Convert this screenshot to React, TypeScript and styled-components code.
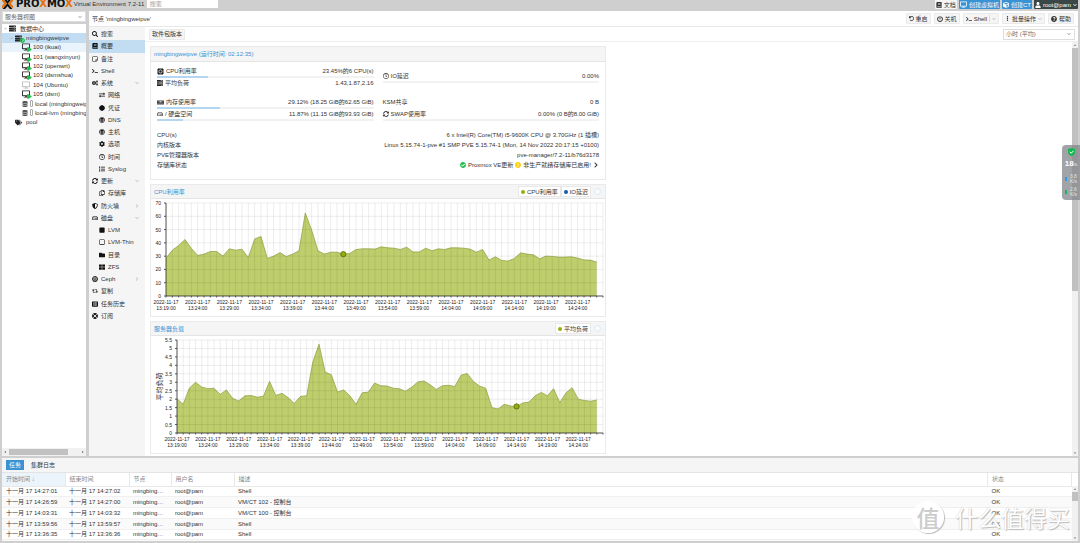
import React from 'react';
import styled, { createGlobalStyle } from 'styled-components';
import {
  FaSearch, FaBook, FaRegStickyNote, FaTerminal, FaCogs, FaExchangeAlt, FaCertificate, FaGlobe, FaCog,
  FaRegClock, FaList, FaSyncAlt, FaRegCopy, FaShieldAlt, FaRegHdd, FaSquare, FaRegSquare, FaFolder,
  FaThLarge, FaRetweet, FaListAlt, FaLifeRing, FaDesktop, FaServer, FaDatabase, FaTags, FaUser, FaCube,
  FaUndo, FaPowerOff, FaEllipsisV, FaQuestionCircle, FaMemory, FaCheckCircle,
  FaExclamationCircle, FaChevronRight, FaChevronDown, FaPlay, FaCaretUp, FaCaretDown, FaCaretLeft, FaCaretRight,
} from 'react-icons/fa';
import type { IconType } from 'react-icons';

const Global = createGlobalStyle`
  *, *::before, *::after { box-sizing: border-box; }
  body {
    margin: 0;
    font: 6px/8px "Liberation Sans", "Noto Sans CJK SC", sans-serif;
    color: #333;
    background: #cfcfcf;
    overflow: hidden;
  }
  button, input, select { font: inherit; color: inherit; margin: 0; padding: 0; border: 0; }
  a { color: inherit; text-decoration: none; }
  ul { list-style: none; margin: 0; padding: 0; }
  svg { flex: none; display: block; }
`;

const Page = styled.div`
  position: relative;
  display: flex;
  flex-direction: column;
  height: 100vh;
  padding: 0 2px 2px;
`;

/* ---------- top bar ---------- */
const TopBar = styled.header`
  display: flex;
  align-items: flex-start;
  height: 11px;
  flex: none;
`;
const Logo = styled.div`
  display: flex;
  align-items: flex-start;
  gap: 3px;
  font: bold 10px/8px "DejaVu Sans", sans-serif;
  color: #111;
`;
const Orange = styled.span`color: #e57000;`;
const Version = styled.span`
  width: 73px;
  margin-left: 1px;
  white-space: nowrap;
`;
const SearchBox = styled.input`
  width: 71px;
  height: 8px;
  padding: 0 3px;
  background: #fff;
  &::placeholder { color: #999; opacity: 1; }
`;
const TopActions = styled.div`
  display: flex;
  gap: 2px;
  margin-left: auto;
`;
const TopButton = styled.button<{ $tone: 'light' | 'blue' | 'dark' }>`
  display: flex;
  align-items: center;
  justify-content: center;
  gap: 2px;
  height: 9px;
  padding: 0 1px;
  border-radius: 0 0 1px 1px;
  white-space: nowrap;
  color: ${p => (p.$tone === 'light' ? '#333' : '#fff')};
  background: ${p => ({ light: '#f5f5f5', blue: '#3892d4', dark: '#3b4747' })[p.$tone]};
`;

/* ---------- left tree ---------- */
const Upper = styled.div`
  display: flex;
  gap: 3px;
  flex: 1;
  min-height: 0;
`;
const Left = styled.aside`
  display: flex;
  flex-direction: column;
  gap: 2px;
  width: 84px;
  flex: none;
`;
const SelectWrap = styled.label<{ $width: string }>`
  display: flex;
  align-items: center;
  width: ${p => p.$width};
  height: 11px;
  padding: 0 3px 0 2px;
  background: #fff;
  border: 1px solid #ddd;
  color: #666;
  select {
    flex: 1;
    appearance: none;
    background: transparent;
    outline: 0;
  }
`;
const TreePanel = styled.div`
  display: flex;
  flex-direction: column;
  flex: 1;
  background: #fff;
  overflow: hidden;
`;
const Tree = styled.ul`
  display: grid;
  grid-auto-rows: 1fr;
  height: 103px;
`;
const TreeRow = styled.a<{ $level: number; $state?: string }>`
  display: flex;
  align-items: center;
  gap: 2px;
  height: 100%;
  padding-left: ${p => [2, 8, 20][p.$level]}px;
  white-space: nowrap;
  background: ${p => (p.$state === 'selected' ? '#c2ddf2' : p.$state === 'hover' ? '#e8f3fb' : 'transparent')};
`;
const IconSlot = styled.span`
  position: relative;
  display: flex;
  align-items: center;
  gap: 2px;
  min-width: 9px;
  color: #222;
`;
const Badge = styled.span`
  position: absolute;
  right: -1px;
  bottom: -1px;
  color: #21bf4b;
`;
const Twisty = styled.span`
  display: flex;
  width: 4px;
  margin-right: -1px;
  color: #999;
`;
const Meter = styled.span`
  width: 3px;
  height: 7px;
  border: 1px solid #aaa;
  border-radius: 1px;
`;
const HScroll = styled.div`
  display: flex;
  align-items: center;
  justify-content: space-between;
  height: 8px;
  margin-top: auto;
  padding: 0 1px;
  background: #f1f1f1;
  color: #555;
`;
const HThumb = styled.div`
  width: 59px;
  height: 6px;
  margin-right: auto;
  margin-left: 2px;
  background: #c1c1c1;
`;

/* ---------- centre ---------- */
const Center = styled.main`
  display: flex;
  flex-direction: column;
  flex: 1;
  min-width: 0;
  background: #fff;
`;
const TitleBar = styled.div`
  display: flex;
  align-items: center;
  justify-content: space-between;
  height: 16px;
  flex: none;
  padding: 0 4px 0 3px;
  border-bottom: 1px solid #e8e8e8;
`;
const ButtonRow = styled.div`
  display: flex;
  gap: 3px;
`;
const ToolButton = styled.button`
  display: flex;
  align-items: center;
  gap: 2px;
  height: 11px;
  padding: 0 2px;
  border: 1px solid #eaeaea;
  border-radius: 1px;
  background: #f5f5f5;
  white-space: nowrap;
`;
const Split = styled.span`
  width: 1px;
  height: 7px;
  background: #ddd;
`;
const CenterBody = styled.div`
  display: flex;
  flex: 1;
  min-height: 0;
`;
const Nav = styled.nav`
  width: 56px;
  flex: none;
  padding-top: 1px;
  background: #f5f5f5;
`;
const NavList = styled.ul`
  display: grid;
  grid-auto-rows: 1fr;
  height: 294px;
`;
const NavLink = styled.a<{ $child?: boolean; $on?: boolean }>`
  display: flex;
  align-items: center;
  gap: 3px;
  height: 100%;
  padding-right: 6px;
  padding-left: ${p => (p.$child ? 10 : 3)}px;
  white-space: nowrap;
  background: ${p => (p.$on ? '#c2ddf2' : 'transparent')};
  svg:first-child { color: #111; }
  svg:last-child:not(:first-child) { margin-left: auto; color: #bbb; }
`;
const Content = styled.section`
  display: flex;
  flex-direction: column;
  flex: 1;
  min-width: 0;
`;
const ContentBar = styled.div`
  display: flex;
  align-items: center;
  justify-content: space-between;
  height: 15px;
  flex: none;
  padding: 0 3px 0 4px;
  border-bottom: 1px solid #eee;
`;
const ScrollArea = styled.div`
  display: flex;
  flex: 1;
  min-height: 0;
  overflow: hidden;
`;
const Panels = styled.div`
  display: grid;
  grid-template-columns: 1fr 1fr;
  align-content: start;
  gap: 4px 5px;
  flex: 1;
  padding: 4px 5px;
`;
const Panel = styled.article`
  grid-column: 1;
  border: 1px solid #eaeaea;
  background: #fff;
`;
const PanelHead = styled.header<{ $height: number }>`
  display: flex;
  align-items: center;
  justify-content: space-between;
  height: ${p => p.$height}px;
  padding: 0 3px;
  border-bottom: 1px solid #e4e4e4;
  background: #f5f5f5;
`;
const PanelTitle = styled.h2`
  margin: 0;
  font-size: 6px;
  font-weight: 400;
  color: #3892d4;
`;
const Legend = styled.div`
  display: flex;
  align-items: center;
`;
const LegendButton = styled.button<{ $dot: string }>`
  display: flex;
  align-items: center;
  gap: 2px;
  height: 11px;
  padding: 0 2px;
  border: 1px solid #e8e8e8;
  background: #fff;
  &::before {
    content: "";
    width: 4px;
    height: 4px;
    border-radius: 50%;
    background: ${p => p.$dot};
  }
`;
const Collapse = styled.button`
  width: 7px;
  height: 7px;
  margin: 0 1px 0 3px;
  border: 1px solid #dce9f4;
  border-radius: 50%;
  background: #f8fbfd;
`;
const VScroll = styled.div`
  display: flex;
  flex-direction: column;
  align-items: center;
  width: 6px;
  flex: none;
  padding: 1px 0;
  background: #f1f1f1;
  color: #777;
`;
const VThumb = styled.div<{ $share: string }>`
  width: 100%;
  height: ${p => p.$share};
  margin: 1px 0 auto;
  background: #c1c1c1;
`;

/* ---------- status panel ---------- */
const StatusBody = styled.div`
  padding: 4px 6px 9px;
`;
const Gauges = styled.div`
  display: grid;
  grid-template-columns: 1fr 1fr;
  gap: 7px 9px;
`;
const GaugeGroup = styled.div<{ $centered?: boolean }>`
  padding-top: ${p => (p.$centered ? 5 : 0)}px;
`;
const GaugeRow = styled.div`
  display: flex;
  flex-direction: column;
  height: 12px;
`;
const Line = styled.div`
  display: flex;
  align-items: center;
  justify-content: space-between;
  height: 10px;
  white-space: nowrap;
`;
const Tag = styled.span`
  display: flex;
  align-items: center;
  gap: 2px;
`;
const Track = styled.div`
  height: 2px;
  background: #f2f2f2;
`;
const Fill = styled.div`
  height: 2px;
  background: #b5d6f0;
`;
const Facts = styled.div`
  margin-top: 9px;
`;

/* ---------- log ---------- */
const Log = styled.section`
  display: flex;
  flex-direction: column;
  height: 83px;
  flex: none;
  margin-top: 2px;
  background: #fff;
`;
const Tabs = styled.div`
  display: flex;
  align-items: center;
  gap: 4px;
  height: 15px;
  flex: none;
  padding: 0 4px;
  background: #f5f5f5;
  border-bottom: 1px solid #e4e4e4;
`;
const Tab = styled.button<{ $on?: boolean }>`
  height: 10px;
  padding: 0 3px;
  color: ${p => (p.$on ? '#fff' : '#333')};
  background: ${p => (p.$on ? '#3892d4' : 'transparent')};
`;
const LogBody = styled.div`
  display: flex;
  flex: 1;
  min-height: 0;
  overflow: hidden;
`;
const LogTable = styled.table`
  flex: 1;
  width: 100%;
  min-width: 0;
  height: 77px;
  table-layout: fixed;
  border-collapse: collapse;
  th, td {
    padding: 0 4px;
    text-align: left;
    font-weight: 400;
    line-height: 8px;
    white-space: nowrap;
    overflow: hidden;
    text-overflow: ellipsis;
  }
  th {
    height: 13px;
    color: #888;
    border-right: 1px solid #e8e8e8;
    border-bottom: 1px solid #e8e8e8;
  }
  th:first-child { background: #ebf4fb; }
  tbody tr:nth-child(even) { background: #fafafa; }
  tbody tr + tr { border-top: 1px solid #f0f0f0; }
`;
const Col = styled.col<{ $width?: number }>`
  width: ${p => (p.$width ? `${p.$width}px` : 'auto')};
`;
const LogScroll = styled(VScroll)`margin-top: 13px;`;

/* ---------- overlays ---------- */
const Monitor = styled.div`
  position: absolute;
  top: 145px;
  right: 0;
  display: flex;
  flex-direction: column;
  align-items: center;
  gap: 1px;
  width: 18px;
  height: 55px;
  padding: 3px 1px;
  border-radius: 4px 0 0 4px;
  background: rgba(135, 137, 142, 0.78);
  color: #e4e4e4;
  font-size: 5px;
  line-height: 5px;
`;
const Percent = styled.strong`
  margin-top: 3px;
  color: #fff;
  font-size: 8px;
  line-height: 8px;
  small { font-size: 4px; font-weight: 400; }
`;
const LoadBar = styled.div`
  width: 12px;
  height: 2px;
  margin-bottom: 3px;
  background: linear-gradient(90deg, #1fc28b 18%, #3c4046 18%);
`;
const Rate = styled.div<{ $color: string }>`
  display: flex;
  align-items: center;
  gap: 3px;
  & + & { margin-top: 2px; }
  &::before {
    content: "";
    width: 2px;
    height: 4px;
    background: ${p => p.$color};
  }
`;
const Watermark = styled.div`
  position: absolute;
  right: 10px;
  bottom: 10px;
  display: flex;
  align-items: center;
  gap: 11px;
  color: #fff;
  font: 23px/32px "Noto Sans CJK SC", sans-serif;
  text-shadow: 1px 1px 1px #bbb, 0 0 1px #bbb;
`;
const Seal = styled.span`
  width: 32px;
  height: 32px;
  border-radius: 50%;
  background: rgba(255, 255, 255, 0.92);
  box-shadow: 1px 1px 1px #bbb;
  color: #ccc;
  text-align: center;
  text-shadow: none;
  font-weight: 500;
`;

/* ---------- data ---------- */
const cpu = [28.5, 34.5, 38, 42.5, 36, 30.5, 31.5, 33.5, 33.5, 30, 35.5, 34.5, 35.2, 29, 43, 44.8, 28.3, 30, 32.7, 29.7, 31.5, 34,
  62.5, 49.5, 34, 31.5, 33, 33, 31.5, 32, 35, 35.5, 35.5, 35.3, 37, 36.3, 36, 35, 36.7, 33.2, 33.2, 36, 34, 35.5, 35, 36.3, 36.3, 36,
  35.3, 33, 35, 27, 29.5, 26.8, 26.3, 28.3, 32.5, 31.5, 31, 28, 30, 29.8, 29.3, 29.3, 29.5, 28.5, 27.2, 27, 25.5];
const load = [2.02, 1.7, 2.65, 3, 2.72, 2.62, 2.65, 2.28, 2.55, 2.05, 1.9, 2.2, 2.22, 2.12, 2.17, 3.05, 2.22, 2.35, 2.1, 1.75, 2.17,
  2.2, 4.2, 5.25, 3.6, 3.45, 2.42, 2.55, 2.2, 1.7, 2.38, 2.42, 2.95, 2.8, 2.78, 2.65, 2.62, 2.47, 2.7, 3.02, 3.08, 2.85, 2.58, 2.8,
  2.82, 2.75, 3.42, 3.52, 3.05, 2.78, 2.65, 1.5, 1.42, 1.7, 1.6, 1.57, 1.77, 1.83, 2.2, 2.4, 2.2, 2.62, 1.8, 2.38, 2.68, 2, 1.92,
  1.88, 1.95];
const times = ['13:19', '13:24', '13:29', '13:34', '13:39', '13:44', '13:49', '13:54', '13:59', '14:04', '14:09', '14:14', '14:19', '14:24'];

type ChartProps = { data: number[]; max: number; step: number; left: number; top: number; bottom: number; mark: number; axis?: string };

function Chart({ data, max, step, left, top, bottom, mark, axis }: ChartProps) {
  const right = 452;
  const dx = (right - left) / 69;
  const x = (i: number) => left + i * dx;
  const y = (v: number) => bottom - (v / max) * (bottom - top);
  const line = data.map((v, i) => `${x(i).toFixed(1)},${y(v).toFixed(1)}`).join(' ');
  const ticks = Array.from({ length: Math.round(max / step) + 1 }, (_, i) => i * step);
  return (
    <svg viewBox="0 0 454 117" width="100%" fontSize="5" fill="#222">
      <polygon points={`${left},${bottom} ${line} ${x(data.length - 1)},${bottom}`} fill="#94ae0a" fillOpacity="0.6" />
      <g stroke="#000" strokeOpacity="0.07" strokeWidth="1">
        {Array.from({ length: 70 }, (_, i) => <line key={i} x1={x(i)} x2={x(i)} y1={top} y2={bottom} />)}
        {ticks.map(t => <line key={t} x1={left} x2={right} y1={y(t)} y2={y(t)} />)}
      </g>
      <polyline points={line} fill="none" stroke="#8a9c3c" strokeWidth="0.7" />
      <g stroke="#333" strokeWidth="0.8">
        <line x1={left} x2={left} y1={top} y2={bottom} />
        <line x1={left} x2={right} y1={bottom} y2={bottom} />
        {Array.from({ length: 70 }, (_, i) => <line key={i} x1={x(i)} x2={x(i)} y1={bottom} y2={bottom + 1.5} />)}
        {ticks.map(t => <line key={t} x1={left - 2} x2={left} y1={y(t)} y2={y(t)} />)}
      </g>
      {ticks.map(t => <text key={t} x={left - 5} y={y(t) + 2} textAnchor="end">{t}</text>)}
      {times.map((t, i) => (
        <text key={t} textAnchor="middle">
          <tspan x={x(i * 5)} y={bottom + 8}>2022-11-17</tspan>
          <tspan x={x(i * 5)} y={bottom + 14}>{t}:00</tspan>
        </text>
      ))}
      {axis && <text transform={`translate(11 ${(top + bottom) / 2}) rotate(-90)`} textAnchor="middle" fontSize="7">{axis}</text>}
      <circle cx={x(mark)} cy={y(data[mark])} r="2.6" fill="#94ae0a" stroke="#566606" strokeWidth="0.8" />
    </svg>
  );
}

type NavItem = [IconType, string, ('child' | 'open' | 'closed' | 'on')?];
const navItems: NavItem[] = [
  [FaSearch, '搜索'], [FaBook, '概要', 'on'], [FaRegStickyNote, '备注'], [FaTerminal, 'Shell'], [FaCogs, '系统', 'open'],
  [FaExchangeAlt, '网络', 'child'], [FaCertificate, '凭证', 'child'], [FaGlobe, 'DNS', 'child'], [FaGlobe, '主机', 'child'],
  [FaCog, '选项', 'child'], [FaRegClock, '时间', 'child'], [FaList, 'Syslog', 'child'], [FaSyncAlt, '更新', 'open'],
  [FaRegCopy, '存储库', 'child'], [FaShieldAlt, '防火墙', 'closed'], [FaRegHdd, '磁盘', 'open'], [FaSquare, 'LVM', 'child'],
  [FaRegSquare, 'LVM-Thin', 'child'], [FaFolder, '目录', 'child'], [FaThLarge, 'ZFS', 'child'], [CephIcon, 'Ceph', 'closed'],
  [FaRetweet, '复制'], [FaListAlt, '任务历史'], [FaLifeRing, '订阅'],
];

function CephIcon({ size = 6 }: { size?: string | number }) {
  return (
    <svg width={size} height={size} viewBox="0 0 16 16" fill="none" stroke="currentColor">
      <circle cx="8" cy="8" r="6.6" strokeWidth="2.6" />
      <circle cx="8" cy="8" r="3.4" strokeWidth="1.6" />
      <circle cx="8" cy="8" r="1" fill="currentColor" />
      <path d="M5 15v-3M11 15v-3" strokeWidth="2" />
    </svg>
  );
}

function ChipIcon() {
  return (
    <svg width="7" height="7" viewBox="0 0 14 14">
      <path d="M3 0v14M5.700 0v14M8.300 0v14M11 0v14M0 3h14M0 5.700h14M0 8.300h14M0 11h14" stroke="#222" />
      <rect x="1.5" y="1.5" width="11" height="11" rx="2" fill="#222" />
      <circle cx="7" cy="7" r="3.2" fill="none" stroke="#fff" strokeWidth="1.4" />
    </svg>
  );
}

function BarsIcon() {
  return (
    <svg width="6" height="6" viewBox="0 0 12 12">
      <path d="M0 0h12v3.400H0zM0 4.300h12v3.400H0zM0 8.600h12V12H0z" fill="#222" />
      <path d="M7.500 1.200h3.500v1H7.500zM4.500 5.500H11v1H4.500zM8.500 9.800H11v1H8.500z" fill="#fff" />
    </svg>
  );
}

const guests: [string, boolean][] = [
  ['100 (ikuai)', true], ['101 (wangxinyun)', true], ['102 (openwrt)', true], ['103 (dsmshua)', true], ['104 (Ubuntu)', false], ['105 (dsm)', true],
];

const tasks = [
  ['17 14:27:01', '17 14:27:02', 'Shell'],
  ['17 14:26:59', '17 14:27:00', 'VM/CT 102 - 控制台'],
  ['17 14:03:31', '17 14:03:32', 'VM/CT 100 - 控制台'],
  ['17 13:59:56', '17 13:59:57', 'Shell'],
  ['17 13:36:35', '17 13:36:36', 'Shell'],
  ['17 13:36:20', '17 13:36:33', 'VM/CT 100 - 控制台'],
];

type GaugeProps = { icon?: React.ReactNode; label: string; value: string; share?: number };
const Gauge = ({ icon, label, value, share }: GaugeProps) => (
  <GaugeRow>
    <Line><Tag>{icon}{label}</Tag><span>{value}</span></Line>
    {share !== undefined && <Track><Fill style={{ width: `${share}%` }} /></Track>}
  </GaugeRow>
);

export default function App() {
  return (
    <Page>
      <Global />
      <TopBar>
        <Logo>
          <svg width="11" height="9" viewBox="0 0 11 9" fill="none">
            <path d="M1 -3L5.500 2.500L10 -3M1 10L5.500 4.500L10 10" stroke="#111" strokeWidth="2" />
            <path d="M0 -0.500L3.500 3.500L0 7.500M11 -0.500L7.500 3.500L11 7.500" stroke="#e57000" strokeWidth="2" />
          </svg>
          <span>PRO<Orange>X</Orange>MO<Orange>X</Orange></span>
        </Logo>
        <Version>Virtual Environment 7.2-11</Version>
        <SearchBox type="search" placeholder="搜索" aria-label="搜索" />
        <TopActions>
          <TopButton $tone="light"><FaBook size={6} />文档</TopButton>
          <TopButton $tone="blue"><FaDesktop size={7} />创建虚拟机</TopButton>
          <TopButton $tone="blue"><FaCube size={6} />创建CT</TopButton>
          <TopButton $tone="dark"><FaUser size={6} />root@pam<FaChevronDown size={4} /></TopButton>
        </TopActions>
      </TopBar>

      <Upper>
        <Left>
          <SelectWrap $width="100%">
            <select aria-label="视图"><option>服务器视图</option></select>
            <FaChevronDown size={4} color="#999" />
          </SelectWrap>
          <TreePanel>
            <Tree>
              <li><TreeRow href="#dc" $level={0}><Twisty><FaChevronDown size={3} /></Twisty><IconSlot><FaServer size={7} /></IconSlot>数据中心</TreeRow></li>
              <li>
                <TreeRow href="#node" $level={1} $state="selected">
                  <Twisty><FaChevronDown size={3} /></Twisty>
                  <IconSlot><FaServer size={7} /><Badge><FaCheckCircle size={5} /></Badge></IconSlot>mingbingweipve
                </TreeRow>
              </li>
              {guests.map(([name, on], i) => (
                <li key={name}>
                  <TreeRow href="#vm" $level={2} $state={i === 0 ? 'hover' : undefined}>
                    <IconSlot><FaDesktop size={8} color={on ? '#222' : '#bbb'} />{on && <Badge><FaPlay size={5} /></Badge>}</IconSlot>{name}
                  </TreeRow>
                </li>
              ))}
              {['local (mingbingweipve)', 'local-lvm (mingbingweipve)'].map(s => (
                <li key={s}><TreeRow href="#storage" $level={2}><IconSlot><FaDatabase size={6} color="#555" /><Meter /></IconSlot>{s}</TreeRow></li>
              ))}
              <li><TreeRow href="#pool" $level={1}><Twisty /><IconSlot><FaTags size={7} /></IconSlot>pool</TreeRow></li>
            </Tree>
            <HScroll><FaCaretLeft size={4} /><HThumb /><FaCaretRight size={4} /></HScroll>
          </TreePanel>
        </Left>

        <Center>
          <TitleBar>
            <span>节点 'mingbingweipve'</span>
            <ButtonRow>
              <ToolButton><FaUndo size={5} />重启</ToolButton>
              <ToolButton><FaPowerOff size={6} />关机</ToolButton>
              <ToolButton><FaTerminal size={6} />Shell<Split /><FaChevronDown size={4} color="#bbb" /></ToolButton>
              <ToolButton><FaEllipsisV size={5} />批量操作<FaChevronDown size={4} color="#bbb" /></ToolButton>
              <ToolButton><FaQuestionCircle size={6} />帮助</ToolButton>
            </ButtonRow>
          </TitleBar>
          <CenterBody>
            <Nav>
              <NavList>
                {navItems.map(([Icon, label, kind]) => (
                  <li key={label}>
                    <NavLink href="#view" $child={kind === 'child'} $on={kind === 'on'}>
                      <Icon size={6} />{label}
                      {kind === 'open' && <FaChevronDown size={4} />}
                      {kind === 'closed' && <FaChevronRight size={4} />}
                    </NavLink>
                  </li>
                ))}
              </NavList>
            </Nav>
            <Content>
              <ContentBar>
                <ToolButton>软件包版本</ToolButton>
                <SelectWrap $width="72px">
                  <select aria-label="时间范围"><option>小时 (平均)</option></select>
                  <FaChevronDown size={4} color="#999" />
                </SelectWrap>
              </ContentBar>
              <ScrollArea>
                <Panels>
                  <Panel>
                    <PanelHead $height={15}><PanelTitle>mingbingweipve (运行时间: 02:12:35)</PanelTitle></PanelHead>
                    <StatusBody>
                      <Gauges>
                        <GaugeGroup>
                          <Gauge icon={<ChipIcon />} label="CPU利用率" value="23.45%的6 CPU(s)" share={23.45} />
                          <Gauge icon={<BarsIcon />} label="平均负荷" value="1.43,1.87,2.16" />
                        </GaugeGroup>
                        <GaugeGroup $centered>
                          <Gauge icon={<FaRegClock size={6} />} label="IO延迟" value="0.00%" share={0} />
                        </GaugeGroup>
                        <GaugeGroup>
                          <Gauge icon={<FaMemory size={7} />} label="内存使用率" value="29.12% (18.25 GiB的62.65 GiB)" share={29.12} />
                          <Gauge icon={<FaRegHdd size={6} />} label="/ 硬盘空间" value="11.87% (11.15 GiB的93.93 GiB)" share={11.87} />
                        </GaugeGroup>
                        <GaugeGroup>
                          <Gauge label="KSM共享" value="0 B" />
                          <Gauge icon={<FaSyncAlt size={6} />} label="SWAP使用率" value="0.00% (0 B的8.00 GiB)" share={0} />
                        </GaugeGroup>
                      </Gauges>
                      <Facts>
                        <Line><span>CPU(s)</span><span>6 x Intel(R) Core(TM) i5-9600K CPU @ 3.70GHz (1 插槽)</span></Line>
                        <Line><span>内核版本</span><span>Linux 5.15.74-1-pve #1 SMP PVE 5.15.74-1 (Mon, 14 Nov 2022 20:17:15 +0100)</span></Line>
                        <Line><span>PVE管理器版本</span><span>pve-manager/7.2-11/b76d3178</span></Line>
                        <Line>
                          <span>存储库状态</span>
                          <Tag>
                            <FaCheckCircle size={6} color="#21bf4b" />Proxmox VE更新
                            <FaExclamationCircle size={6} color="#fc0" />非生产就绪存储库已启用!
                            <FaChevronRight size={6} />
                          </Tag>
                        </Line>
                      </Facts>
                    </StatusBody>
                  </Panel>
                  <Panel>
                    <PanelHead $height={14}>
                      <PanelTitle>CPU利用率</PanelTitle>
                      <Legend>
                        <LegendButton $dot="#94ae0a">CPU利用率</LegendButton>
                        <LegendButton $dot="#115fa6">IO延迟</LegendButton>
                        <Collapse aria-label="收起" />
                      </Legend>
                    </PanelHead>
                    <Chart data={cpu} max={70} step={10} left={15} top={4} bottom={97} mark={28} />
                  </Panel>
                  <Panel>
                    <PanelHead $height={14}>
                      <PanelTitle>服务器负载</PanelTitle>
                      <Legend>
                        <LegendButton $dot="#94ae0a">平均负荷</LegendButton>
                        <Collapse aria-label="收起" />
                      </Legend>
                    </PanelHead>
                    <Chart data={load} max={5.5} step={0.5} left={26} top={4} bottom={97} mark={55} axis="平均负荷" />
                  </Panel>
                </Panels>
                <VScroll><FaCaretUp size={4} /><VThumb $share="59%" /><FaCaretDown size={4} /></VScroll>
              </ScrollArea>
            </Content>
          </CenterBody>
        </Center>
      </Upper>

      <Log>
        <Tabs><Tab $on>任务</Tab><Tab>集群日志</Tab></Tabs>
        <LogBody>
          <LogTable>
            <colgroup>
              <Col $width={63} /><Col $width={64} /><Col $width={42} /><Col $width={63} /><Col /><Col $width={84} />
            </colgroup>
            <thead>
              <tr><th>开始时间 ↓</th><th>结束时间</th><th>节点</th><th>用户名</th><th>描述</th><th>状态</th></tr>
            </thead>
            <tbody>
              {tasks.map(([start, end, what]) => (
                <tr key={start}>
                  <td>十一月 {start}</td><td>十一月 {end}</td><td>mingbingweipve</td><td>root@pam</td><td>{what}</td><td>OK</td>
                </tr>
              ))}
            </tbody>
          </LogTable>
          <LogScroll><FaCaretUp size={4} /><VThumb $share="9px" /><FaCaretDown size={4} /></LogScroll>
        </LogBody>
      </Log>

      <Monitor>
        <svg width="7" height="8" viewBox="0 0 14 16">
          <path d="M7 0l7 2v6c0 4-3 7-7 8c-4-1-7-4-7-8V2z" fill="#12b84f" />
          <path d="M3.500 7.500l3 3l4.500-5" fill="none" stroke="#fff" strokeWidth="2" />
        </svg>
        <Percent>18<small>%</small></Percent>
        <LoadBar />
        <Rate $color="#2f9be8"><span>3.8<br />K/s</span></Rate>
        <Rate $color="#1fb35a"><span>2.6<br />K/s</span></Rate>
      </Monitor>
      <Watermark><Seal>值</Seal>什么值得买</Watermark>
    </Page>
  );
}
